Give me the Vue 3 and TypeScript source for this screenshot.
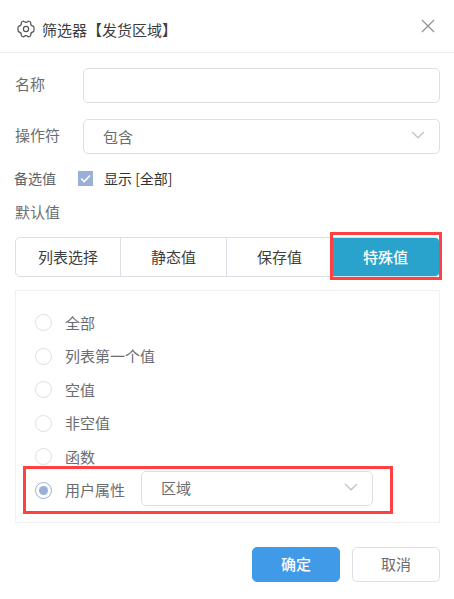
<script setup lang="ts">
import { ref } from 'vue'

const name = ref('')
const showAll = ref(true)
const tabs: string[] = ['列表选择', '静态值', '保存值', '特殊值']
const activeTab = ref('特殊值')
const options: string[] = ['全部', '列表第一个值', '空值', '非空值', '函数', '用户属性']
const selected = ref('用户属性')
</script>

<template>
  <div class="dialog">
    <header class="header">
      <svg class="gear" viewBox="0 0 18 18" width="18" height="18">
        <path d="M5.7 1.4Q6.4.9 7 1.5Q9 3.1 11 1.5Q11.6.9 12.3 1.4L13.4 2.1Q13.9 2.5 13.7 3.2Q13.5 5.5 16 6.2Q16.8 6.4 16.9 7.1Q17.2 9 16.9 10.9Q16.8 11.6 16 11.8Q13.5 12.5 13.7 14.8Q13.9 15.5 13.4 15.9L12.3 16.6Q11.6 17.1 11 16.5Q9 14.9 7 16.5Q6.4 17.1 5.7 16.6L4.6 15.9Q4.1 15.5 4.3 14.8Q4.5 12.5 2 11.8Q1.2 11.6 1.1 10.9Q.8 9 1.1 7.1Q1.2 6.4 2 6.2Q4.5 5.5 4.3 3.2Q4.1 2.5 4.6 2.1Z" />
        <circle cx="9" cy="9" r="2.6" />
      </svg>
      <h1 class="title">筛选器【发货区域】</h1>
      <svg class="close" viewBox="0 0 14 14" width="14" height="14">
        <path d="M1 1L13 13M13 1L1 13" />
      </svg>
    </header>

    <main class="content">
      <div class="row name-row">
        <span class="label">名称</span>
        <input v-model="name" class="field" type="text" />
      </div>
      <div class="row">
        <span class="label">操作符</span>
        <div class="field select">
          <span>包含</span>
          <svg class="arrow" viewBox="0 0 14 8" width="14" height="8"><path d="M1 1L7 6.7L13 1" /></svg>
        </div>
      </div>
      <div class="check-row" @click="showAll = !showAll">
        <span class="check-label">备选值</span>
        <span class="checkbox">
          <svg v-if="showAll" viewBox="0 0 15 15" width="15" height="15"><path d="M3.2 7.6L6.2 10.6L12 4.6" /></svg>
        </span>
        <span class="check-text">显示 [全部]</span>
      </div>
      <div class="default-label">默认值</div>

      <div class="tabs">
        <button
          v-for="tab in tabs"
          :key="tab"
          class="tab"
          :class="{ active: tab === activeTab }"
          @click="activeTab = tab"
        >{{ tab }}</button>
        <span class="mark tab-mark"></span>
      </div>

      <div class="panel">
        <div v-for="option in options" :key="option" class="option" @click="selected = option">
          <span class="radio" :class="{ checked: option === selected }"></span>
          <span class="option-text">{{ option }}</span>
          <div v-if="option === '用户属性'" class="select attribute">
            <span>区域</span>
            <svg class="arrow" viewBox="0 0 14 8" width="14" height="8"><path d="M1 1L7 6.7L13 1" /></svg>
          </div>
        </div>
        <span class="mark option-mark"></span>
      </div>
    </main>

    <footer class="footer">
      <button class="button primary">确定</button>
      <button class="button">取消</button>
    </footer>
  </div>
</template>

<style>
body {
  margin: 0;
  background: #fff;
}
</style>

<style scoped>
* {
  box-sizing: border-box;
}
.dialog {
  width: 454px;
  height: 599px;
  background: #fff;
  color: #6a6c70;
  font: 15px/20px "Noto Sans CJK SC", sans-serif;
  overflow: hidden;
}
.header {
  display: flex;
  align-items: center;
  height: 53px;
  padding: 6px 19px 0 17px;
  border-bottom: 1px solid #efeff0;
}
.gear {
  fill: none;
  stroke: #555;
  stroke-width: 1.2;
}
.title {
  flex: 1;
  margin: 2px 0 0 7px;
  color: #3c3d40;
  font-size: 15px;
  font-weight: 400;
  line-height: 20px;
}
.close {
  margin-bottom: 6px;
  fill: none;
  stroke: #909399;
  stroke-width: 1.3;
}
.content {
  padding: 15px 14px 0 15px;
}
.row {
  display: flex;
  align-items: center;
  height: 35px;
}
.name-row {
  margin-bottom: 16px;
}
.label {
  width: 68px;
  margin-top: -3px;
}
.field {
  flex: 1;
  height: 35px;
  border: 1px solid #dcdfe6;
  border-radius: 5px;
  background: #fff;
  outline: none;
}
.select {
  display: flex;
  align-items: center;
  justify-content: space-between;
  padding: 0 14px 0 19px;
}
.arrow {
  margin-top: -3px;
  fill: none;
  stroke: #c0c4cc;
  stroke-width: 1.4;
}
.check-row {
  display: flex;
  align-items: center;
  height: 20px;
  margin-top: 14px;
  color: #303133;
  font-size: 14px;
}
.check-label {
  width: 64px;
  margin-left: -1px;
  color: #606266;
}
.checkbox {
  width: 15px;
  height: 15px;
  margin-right: 11px;
  background: #9aafd5;
}
.checkbox svg {
  display: block;
  fill: none;
  stroke: #fff;
  stroke-width: 1.5;
}
.default-label {
  margin-top: 14px;
}
.tabs {
  position: relative;
  display: grid;
  grid-template-columns: 105px 106px 106px 106px;
  height: 40px;
  margin-top: 15px;
  border: 1px solid #dcdfe6;
  border-radius: 5px;
}
.tab {
  padding: 0 0 1px;
  border: 0;
  border-right: 1px solid #dcdfe6;
  background: transparent;
  color: #3c3d40;
  font: inherit;
}
.tab.active {
  padding-right: 1px;
  border-right: 0;
  border-radius: 0 4px 4px 0;
  background: #29a3cc;
  color: #fff;
  font-weight: 500;
}
.mark {
  position: absolute;
  border: 3px solid #ff4141;
  pointer-events: none;
}
.tab-mark {
  top: -6px;
  right: -3px;
  width: 112px;
  height: 48px;
}
.panel {
  position: relative;
  display: grid;
  grid-template-rows: 33px 34px 33px 34px 33px 34px;
  height: 233px;
  margin-top: 13px;
  padding: 15px 19px;
  border: 1px solid #f0f0f2;
}
.option {
  display: flex;
  align-items: center;
}
.radio {
  display: flex;
  align-items: center;
  justify-content: center;
  width: 17px;
  height: 17px;
  margin-right: 13px;
  border: 1px solid #dcdfe6;
  border-radius: 50%;
}
.radio.checked {
  border-color: #9aafd5;
}
.radio.checked::after {
  width: 9px;
  height: 9px;
  border-radius: 50%;
  background: #9aafd5;
  content: "";
}
.attribute {
  width: 232px;
  height: 35px;
  margin: -4px 0 0 16px;
  border: 1px solid #dcdfe6;
  border-radius: 5px;
}
.option-mark {
  top: 175px;
  left: 7px;
  width: 370px;
  height: 48px;
}
.footer {
  display: flex;
  justify-content: flex-end;
  gap: 12px;
  padding: 24px 14px 0;
}
.button {
  width: 88px;
  height: 35px;
  padding: 0 0 1px;
  border: 1px solid #dcdfe6;
  border-radius: 5px;
  background: #fff;
  color: #6a6c70;
  font: inherit;
}
.primary {
  border-color: #409ae8;
  background: #409ae8;
  color: #fff;
  font-weight: 500;
}
</style>
